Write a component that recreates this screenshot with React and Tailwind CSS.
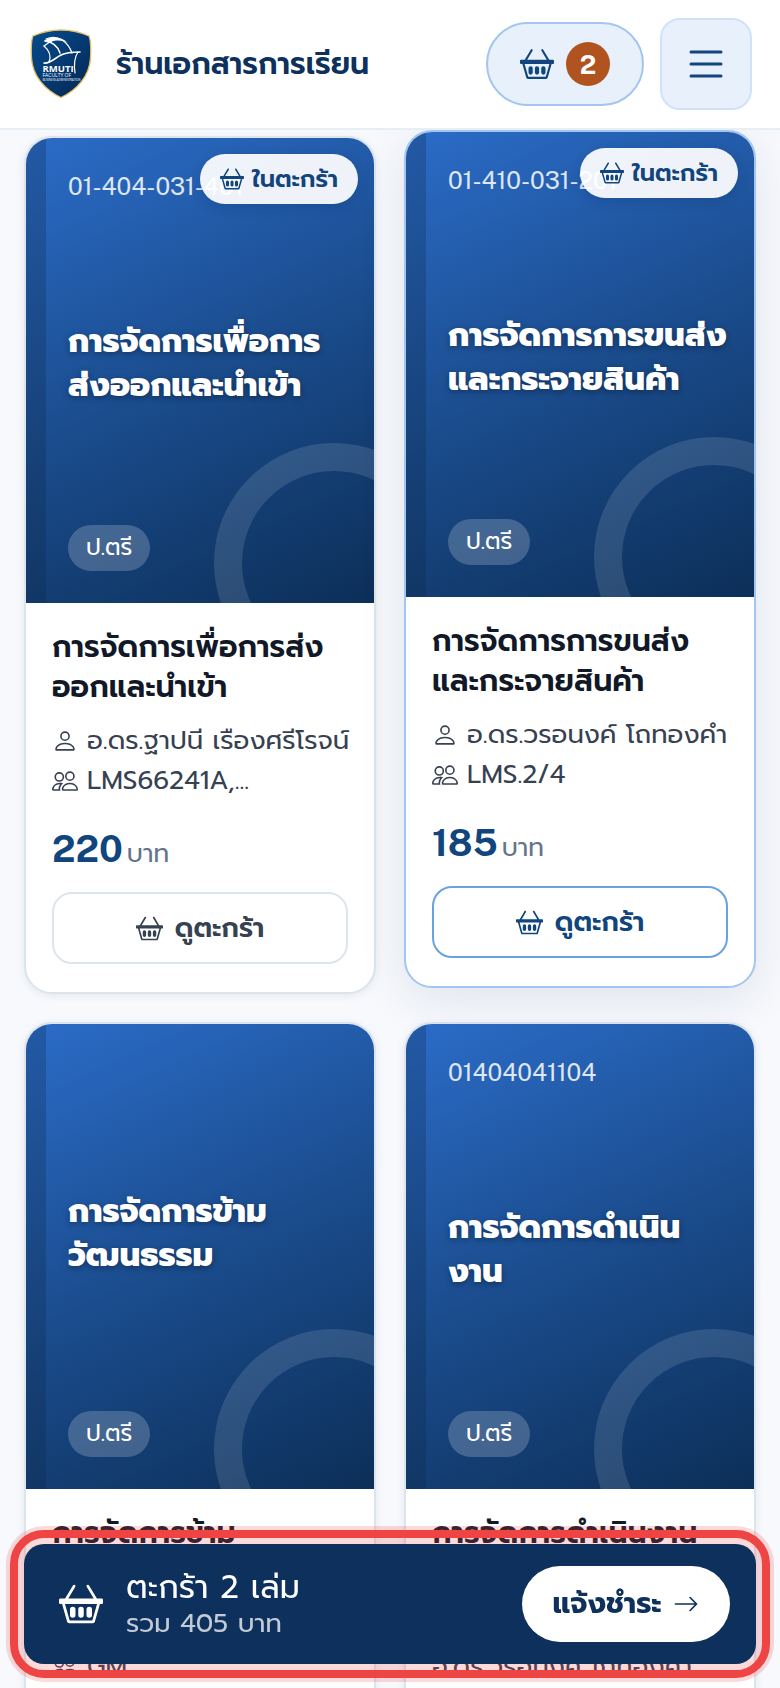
import React from "react";
import { BsBasket2, BsPerson, BsPeople, BsList, BsArrowRight } from "react-icons/bs";

const books = [
  {
    id: 1,
    code: "01-404-031-401",
    cover: ["การจัดการเพื่อการ", "ส่งออกและนำเข้า"],
    title: ["การจัดการเพื่อการส่ง", "ออกและนำเข้า"],
    teachers: ["อ.ดร.ฐาปนี เรืองศรีโรจน์"],
    group: "LMS66241A,...",
    price: 220,
    inCart: true,
  },
  {
    id: 2,
    code: "01-410-031-201",
    cover: ["การจัดการการขนส่ง", "และกระจายสินค้า"],
    title: ["การจัดการการขนส่ง", "และกระจายสินค้า"],
    teachers: ["อ.ดร.วรอนงค์ โถทองคำ"],
    group: "LMS.2/4",
    price: 185,
    inCart: true,
    active: true,
  },
  {
    id: 3,
    code: "",
    cover: ["การจัดการข้าม", "วัฒนธรรม"],
    title: ["การจัดการข้าม", "วัฒนธรรม"],
    teachers: ["อ.ดร.ฐาปนี เรืองศรีโรจน์"],
    group: "GM",
    price: 200,
  },
  {
    id: 4,
    code: "01404041104",
    cover: ["การจัดการดำเนิน", "งาน"],
    title: ["การจัดการดำเนินงาน"],
    teachers: ["อ.ดร.ฐาปนี เรืองศรีโรจน์", "อ.ดร.วรอนงค์ โถทองคำ"],
    group: "LMS.2/4",
    price: 200,
  },
];

function Logo() {
  return (
    <svg viewBox="0 0 62 70" className="h-[70px] w-[62px] shrink-0" role="img" aria-label="RMUTI">
      <defs>
        <linearGradient id="shield" x1="0" y1="0" x2="1" y2="1">
          <stop offset="0" stopColor="#064b8c" />
          <stop offset="0.5" stopColor="#053a73" />
          <stop offset="1" stopColor="#04254f" />
        </linearGradient>
      </defs>
      <path
        d="M31 1C40 1 50 3 59 7C61 12 61 20 60.500 29C59.500 47 47 61 31 68.500C15 61 2.500 47 1.500 29C1 20 1 12 3 7C12 3 22 1 31 1Z"
        fill="url(#shield)"
        stroke="#e3bf62"
        strokeWidth="1.300"
      />
      <path d="M14 12C20 7 31 7 38 14C33 11 26 11 21 13Z" fill="#fff" />
      <g fill="none" stroke="#fff" strokeLinecap="round">
        <path d="M16 10C28 5 38 13 42 24" strokeWidth="1.300" />
        <path d="M15 12C23 13 28 18 30 24" strokeWidth="1.500" />
        <path d="M14 17C20 22 21 28 19 33" strokeWidth="1.200" />
        <path d="M14 17L21 12" strokeWidth="1.200" />
        <path d="M14 34C20 35 25 29 31 26C37 23 43 23 50 23" strokeWidth="1.600" />
        <path d="M48 23C44 29 44 37 45 44" strokeWidth="1.200" />
      </g>
      <text x="12.500" y="43" fontSize="9.500" fontWeight="700" fill="#fff" fontFamily="Open Sans, sans-serif">RMUTI</text>
      <text x="12.500" y="48" fontSize="5" fill="#fff" fontFamily="Open Sans, sans-serif">FACULTY OF</text>
      <text x="12.500" y="51.500" fontSize="2.900" fill="#fff" fontFamily="Open Sans, sans-serif">BUSINESS ADMINISTRATION</text>
    </svg>
  );
}

function Lines({ items }) {
  return items.map((line) => (
    <span key={line} className="block whitespace-nowrap">
      {line}
    </span>
  ));
}

function Cover({ book }) {
  return (
    <div className="relative flex h-[465px] flex-col items-start justify-between overflow-hidden bg-[linear-gradient(155deg,#2b6cc8_0%,#1a4b8b_52%,#0c2f58_100%)] py-8 pl-[42px] pr-4 text-white">
      <div className="absolute inset-y-0 left-0 w-5 bg-[#0c2340]/25" />
      <div className="absolute -bottom-20 -right-20 size-60 rounded-full border-[28px] border-white/12" />
      <p className="font-['Public_Sans',Inter,sans-serif] text-2xl text-white/85">{book.code}</p>
      <h3 className="relative text-[32px] font-extrabold leading-[44px] [text-shadow:0_2px_6px_rgba(0,0,0,0.35)]">
        <Lines items={book.cover} />
      </h3>
      <span className="relative flex h-[46px] items-center rounded-full bg-white/20 px-[18px] text-[23px] leading-8">
        ป.ตรี
      </span>
      {book.inCart && (
        <span className="absolute right-4 top-4 flex h-[50px] items-center gap-2 rounded-full bg-white/93 px-5 text-2xl font-semibold text-[#11457e] shadow-[0_4px_12px_rgba(12,47,88,0.2)]">
          <BsBasket2 className="size-6" />
          ในตะกร้า
        </span>
      )}
    </div>
  );
}

function Card({ book }) {
  const frame = book.active
    ? "-translate-y-1.5 border-[#a3c6f0] shadow-[0_12px_48px_rgba(15,40,70,0.10)]"
    : "border-[#dce4ec] shadow-[0_2px_8px_rgba(15,40,70,0.08)]";
  const button = book.active ? "border-[#6aa2e0] text-[#11457e]" : "border-[#dce4ec] text-[#364152]";
  return (
    <article className={"overflow-hidden rounded-[28px] border-2 bg-white " + frame}>
      <Cover book={book} />
      <div className="px-[26px] pb-7 pt-6">
        <h2 className="min-h-20 text-[30px] font-semibold leading-10 text-[#111827]">
          <Lines items={book.title} />
        </h2>
        <div className="mt-3.5 text-[26px] leading-10 text-[#364152]">
          {book.teachers.map((name, i) => (
            <p key={name} className="flex items-center gap-[9px] whitespace-nowrap">
              {i === 0 && <BsPerson className="size-[26px] shrink-0" />}
              {name}
            </p>
          ))}
          <p className="flex items-center gap-[9px] whitespace-nowrap">
            <BsPeople className="size-[26px] shrink-0" />
            {book.group}
          </p>
        </div>
        <p className="mt-[22px] flex h-[51px] items-baseline gap-1">
          <strong className="font-['Public_Sans',Inter,sans-serif] text-[37px] font-bold leading-[51px] text-[#11457e]">
            {book.price}
          </strong>
          <span className="text-[25px] text-[#64748b]">บาท</span>
        </p>
        <button
          type="button"
          className={"mt-[18px] flex h-[72px] w-full items-center justify-center gap-3 rounded-[20px] border-2 bg-white text-[27px] leading-10 font-semibold " + button}
        >
          <BsBasket2 className="size-[27px]" />
          ดูตะกร้า
        </button>
      </div>
    </article>
  );
}

export default function App() {
  return (
    <div className="flex h-screen flex-col overflow-hidden bg-[#f7f9fd] font-[Prompt,Kanit,'Noto_Sans_Thai','Noto_Sans',sans-serif]">
      <header className="z-10 flex h-[130px] shrink-0 items-center justify-between border-b-2 border-[#e6eef6] bg-white pl-[30px] pr-7">
        <a href="#home" className="flex items-center gap-6">
          <Logo />
          <span className="whitespace-nowrap text-[30px] font-semibold text-[#0d315c]">ร้านเอกสารการเรียน</span>
        </a>
        <div className="flex items-center gap-4">
          <button
            type="button"
            aria-label="ตะกร้า"
            className="flex h-[84px] w-[158px] items-center justify-center gap-3 rounded-full border-2 border-[#a3c6f0] bg-[#e8f0fb] text-[#11457e]"
          >
            <BsBasket2 className="size-[34px]" />
            <span className="flex size-11 items-center justify-center rounded-full bg-[#b0531e] font-['Public_Sans',Inter,sans-serif] text-[26px] font-bold text-white">
              2
            </span>
          </button>
          <button
            type="button"
            aria-label="เมนู"
            className="flex size-[92px] items-center justify-center rounded-[20px] border-2 border-[#d0e2f7] bg-[#e8f0fb] text-[#11457e]"
          >
            <BsList className="size-12" />
          </button>
        </div>
      </header>

      <main className="min-h-0 flex-1 overflow-y-auto px-6 pb-40 pt-1.5 [scrollbar-width:none]">
        <div className="grid grid-cols-2 gap-7">
          {books.map((book) => (
            <Card key={book.id} book={book} />
          ))}
        </div>
      </main>

      <aside className="fixed inset-x-6 bottom-6 z-20 flex h-[120px] items-center justify-between rounded-[20px] bg-[#0d315c] pl-[35px] pr-[26px] text-white shadow-[0_0_0_18px_rgba(239,68,68,0.2)] outline-8 outline-offset-6 outline-[#ef4444]">
        <div className="flex items-center gap-[23px]">
          <BsBasket2 className="size-11" />
          <div>
            <p className="text-[32px] leading-10">ตะกร้า 2 เล่ม</p>
            <p className="text-[26px] leading-8 text-white/75">รวม 405 บาท</p>
          </div>
        </div>
        <button
          type="button"
          className="flex h-[76px] w-52 items-center justify-center gap-3 rounded-full bg-white text-[29px] font-bold text-[#0d315c]"
        >
          แจ้งชำระ
          <BsArrowRight className="size-[26px]" />
        </button>
      </aside>
    </div>
  );
}
